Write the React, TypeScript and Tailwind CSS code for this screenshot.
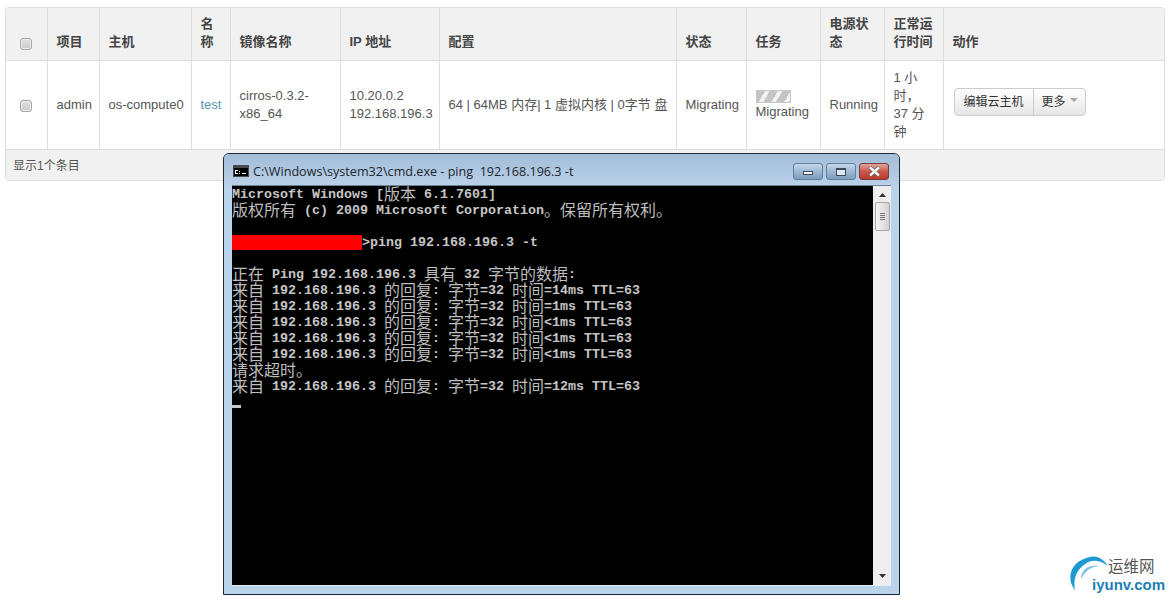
const sans = "font-['Liberation_Sans','Noto_Sans_CJK_SC',sans-serif]";

const columns = [41, 52, 92, 39, 110, 99, 237, 70, 74, 64, 59, 221];

const headers = ["项目", "主机", "名称", "镜像名称", "IP 地址", "配置", "状态", "任务", "电源状态", "正常运行时间", "动作"];

const Checkbox = () => (
  <span className="block w-3 h-3 rounded-[3px] border border-[#a9a9a9] bg-gradient-to-b from-[#e2e2e2] to-[#c9c9c9] shadow-[inset_0_0_0_1px_#ededed]" />
);

const Td = ({ children }: { children: React.ReactNode }) => (
  <td className="border-l border-[#ddd] pl-[9px] pr-[7px] py-2 align-middle leading-[18px]">{children}</td>
);

const ConsoleLine = ({ text }: { text: string }) => {
  // the console font has 8px latin cells and 16px CJK cells
  const runs = text.match(/[\u3000-\u9fff\uff00-\uffef]+|[^\u3000-\u9fff\uff00-\uffef]+/g) ?? [];
  return (
    <div className="flex h-4 leading-4 whitespace-pre">
      {runs.map((run, i) =>
        /[\u3000-\u9fff\uff00-\uffef]/.test(run) ? (
          <span key={i} className="-mt-px font-['Noto_Sans_CJK_SC',sans-serif] font-normal text-[16px] leading-4 text-[#bdbdbd]">
            {run}
          </span>
        ) : (
          <span key={i} className="pt-px">
            {run}
          </span>
        )
      )}
    </div>
  );
};

const replies = [
  "来自 192.168.196.3 的回复: 字节=32 时间=14ms TTL=63",
  "来自 192.168.196.3 的回复: 字节=32 时间=1ms TTL=63",
  "来自 192.168.196.3 的回复: 字节=32 时间<1ms TTL=63",
  "来自 192.168.196.3 的回复: 字节=32 时间<1ms TTL=63",
  "来自 192.168.196.3 的回复: 字节=32 时间<1ms TTL=63",
  "请求超时。",
  "来自 192.168.196.3 的回复: 字节=32 时间=12ms TTL=63",
];

const CmdWindow = () => (
  <div className="absolute left-[223px] top-[153px] w-[677px] h-[442px] rounded-t-[6px] border border-[#1c2a38] bg-[#b9d3ea] flex flex-col">
    <div className="h-[31px] shrink-0 flex items-start rounded-t-[5px] bg-gradient-to-b from-[#a3bdd9] to-[#b9d1e8] pl-[9px]">
      <svg width="16" height="12" viewBox="0 0 16 12" className="mt-[11px] shrink-0">
        <rect width="16" height="12" fill="#4a4a4a" />
        <rect x="1" y="3" width="14" height="8" fill="#000" />
        <rect x="2" y="5" width="3" height="1" fill="#fff" />
        <rect x="2" y="5" width="1" height="4" fill="#fff" />
        <rect x="2" y="8" width="3" height="1" fill="#fff" />
        <rect x="6" y="6" width="1" height="1" fill="#fff" />
        <rect x="6" y="8" width="1" height="1" fill="#fff" />
        <rect x="9" y="8" width="4" height="1" fill="#fff" />
      </svg>
      <span className="ml-[4px] mt-[10px] text-[12.6px] leading-4 text-[#1c2530] whitespace-pre font-['Open_Sans',sans-serif]">
        C:\Windows\system32\cmd.exe - ping  192.168.196.3 -t
      </span>
      <div className="ml-auto mr-[10px] mt-[9px] flex gap-[3px]">
        <div className="w-[30px] h-[17px] rounded-[3px] border border-[#5f7f9f] bg-gradient-to-b from-[#c5d8ea] via-[#9fb8d2] to-[#7d9cbc] flex items-center justify-center">
          <span className="w-[10px] h-[4px] mt-[3px] border border-[#3b4a5a] bg-white" />
        </div>
        <div className="w-[30px] h-[17px] rounded-[3px] border border-[#5f7f9f] bg-gradient-to-b from-[#c5d8ea] via-[#9fb8d2] to-[#7d9cbc] flex items-center justify-center">
          <span className="w-[10px] h-[8px] border border-[#3b4a5a] border-t-2 bg-[#dfe8f1]" />
        </div>
        <div className="w-[30px] h-[17px] rounded-[3px] border border-[#7c3b36] bg-gradient-to-b from-[#dda59c] via-[#c8574a] to-[#b8392d] flex items-center justify-center">
          <svg width="13" height="11" viewBox="0 0 13 11">
            <path d="M2 1.5 L11 9.5 M11 1.5 L2 9.5" stroke="#3f4a55" strokeWidth="3.6" />
            <path d="M2 1.5 L11 9.5 M11 1.5 L2 9.5" stroke="#fff" strokeWidth="2.4" />
          </svg>
        </div>
      </div>
    </div>
    <div className="flex ml-[8px] mr-[8px] h-[401px] border-t border-b border-t-[#6f8296] border-b-[#e6eef5]">
      <div className="w-[641px] bg-black text-[13.33px] font-bold text-[#c6c6c6] font-['Liberation_Mono',monospace]">
        <ConsoleLine text="Microsoft Windows [版本 6.1.7601]" />
        <ConsoleLine text="版权所有 (c) 2009 Microsoft Corporation。保留所有权利。" />
        <div className="h-4" />
        <div className="h-4 flex">
          <span className="w-[130px] h-[15px] mt-px bg-[#fe0000] shrink-0" />
          <span className="pt-px leading-4 whitespace-pre">&gt;ping 192.168.196.3 -t</span>
        </div>
        <div className="h-4" />
        <ConsoleLine text="正在 Ping 192.168.196.3 具有 32 字节的数据:" />
        {replies.map((line, i) => (
          <ConsoleLine key={i} text={line} />
        ))}
        <div className="w-[9px] h-[3px] mt-[11px] bg-[#c6c6c6]" />
      </div>
      <div className="flex-1 flex flex-col items-center bg-[#eeeeee]">
        <svg width="9" height="5" viewBox="0 0 9 5" className="mt-[7px]">
          <path d="M4.5 0 L8 4 H1 Z" fill="#333" />
        </svg>
        <div className="mt-[4px] w-[15px] h-[29px] rounded-[2px] border border-[#a5a5a5] bg-gradient-to-r from-[#f4f4f4] to-[#d2d2d2] flex flex-col items-center justify-center gap-[1px]">
          <span className="w-[5px] h-px bg-[#777]" />
          <span className="w-[5px] h-px bg-[#777]" />
          <span className="w-[5px] h-px bg-[#777]" />
          <span className="w-[5px] h-px bg-[#777]" />
        </div>
        <svg width="9" height="5" viewBox="0 0 9 5" className="mt-auto mb-[7px]">
          <path d="M4.5 5 L8 1 H1 Z" fill="#333" />
        </svg>
      </div>
    </div>
  </div>
);

const Watermark = () => (
  <div className="absolute left-[1066px] top-[552px] w-[106px] h-[46px]">
    <svg width="46" height="44" viewBox="0 0 46 44" className="absolute left-0 top-0">
      <path d="M9 38 C1 28 2 10 24 5 C32 3 38 8 42 14 C34 8 26 7 19 12 C10 18 7 28 9 38 Z" fill="#1d9ad6" />
      <path d="M15 27 C15 17 24 11 36 15 C27 13 20 18 15 27 Z" fill="#7cc4e8" />
    </svg>
    <span className="absolute left-[42px] top-[3px] text-[15.5px] leading-5 text-[#555] font-['Noto_Sans_CJK_SC',sans-serif]">运维网</span>
    <span className="absolute left-[26px] top-[25px] text-[15px] leading-4 font-bold text-[#1a7fb5] font-['Liberation_Sans',sans-serif]">iyunv.com</span>
  </div>
);

export default function App() {
  return (
    <div className={`relative w-[1172px] h-[601px] overflow-hidden bg-white pt-[7px] pl-[5px] ${sans} text-[13px] text-[#555]`}>
      <div className="w-[1160px] rounded-[4px] border border-[#ddd] overflow-hidden">
        <table className="w-full table-fixed border-collapse">
          <colgroup>
            {columns.map((w, i) => (
              <col key={i} style={{ width: w }} />
            ))}
          </colgroup>
          <thead>
            <tr className="bg-[#f1f1f1] h-[52px]">
              <th className="pt-2 pb-[7px] pl-[14px] pr-2 align-bottom">
                <div className="pb-[3px]">
                  <Checkbox />
                </div>
              </th>
              {headers.map((h) => (
                <th key={h} className="border-l border-[#ddd] pl-[9px] pr-[7px] pt-[7px] pb-[9px] align-bottom text-left font-bold leading-[18px] text-[#444]">
                  {h}
                </th>
              ))}
            </tr>
          </thead>
          <tbody>
            <tr className="border-t border-[#ddd] h-[88px]">
              <td className="pt-[9px] pb-[7px] pl-[14px] pr-2 align-middle">
                <Checkbox />
              </td>
              <Td>admin</Td>
              <Td>
                <span className="whitespace-nowrap">os-compute0</span>
              </Td>
              <Td>
                <span className="text-[#5b94b0]">test</span>
              </Td>
              <Td>cirros-0.3.2-x86_64</Td>
              <Td>
                10.20.0.2
                <br />
                192.168.196.3
              </Td>
              <Td>
                <span className="whitespace-nowrap">64 | 64MB 内存| 1 虚拟内核 | 0字节 盘</span>
              </Td>
              <Td>Migrating</Td>
              <Td>
                <div className="w-[35px] h-[13px] border border-[#c8c8c8] bg-[repeating-linear-gradient(120deg,#c4c4c4_0px,#c4c4c4_7px,#f1f1f1_7px,#f1f1f1_11px)]" />
                <div className="leading-[18px]">Migrating</div>
              </Td>
              <Td>Running</Td>
              <Td>
                1 小时，
                <br />
                37 分钟
              </Td>
              <td className="border-l border-[#ddd] pl-[10px] pr-2 align-middle">
                <div className="flex -mt-[7px] h-7 w-[132px] rounded-[4px] border border-[#ccc] bg-gradient-to-b from-white to-[#e6e6e6] text-[12px] text-[#333] leading-[26px]">
                  <span className="w-[78px] text-center">编辑云主机</span>
                  <span className="flex-1 flex items-center border-l border-[#ccc] pl-2 gap-[4px]">
                    更多
                    <span className="w-0 h-0 -mt-[3px] border-x-4 border-x-transparent border-t-4 border-t-[#aaa]" />
                  </span>
                </div>
              </td>
            </tr>
            <tr className="border-t border-[#ddd] bg-[#f1f1f1] h-[30px]">
              <td colSpan={12} className="pl-[7px] pt-[2px] leading-[18px] text-[12px]">
                显示1个条目
              </td>
            </tr>
          </tbody>
        </table>
      </div>
      <CmdWindow />
      <Watermark />
    </div>
  );
}
